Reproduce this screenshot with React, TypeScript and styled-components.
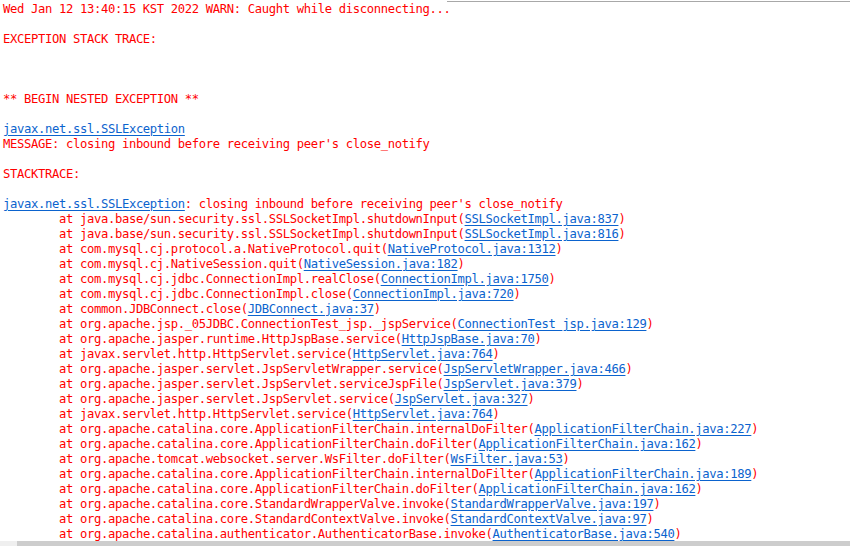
import React from "react";
import styled, { createGlobalStyle } from "styled-components";

const GlobalStyle = createGlobalStyle`
  html, body {
    margin: 0;
    padding: 0;
    background: #ffffff;
  }
  #root {
    height: 546px;
  }
`;

const Page = styled.div`
  width: 850px;
  height: 546px;
  display: flex;
  flex-direction: column;
  overflow: hidden;
  background: #ffffff;
`;

const Console = styled.div`
  flex: 1;
  overflow: hidden;
  padding-left: 3px;
  font-family: "DejaVu Sans Mono", "Liberation Mono", monospace;
  font-size: 12.2px;
  letter-spacing: -0.344px;
  line-height: 15px;
  color: #ff0000;
`;

const TopEdge = styled.div`
  height: 1px;
  margin: 1px 0 0 444px;
  background: #a8a8a8;
`;

const Line = styled.div`
  white-space: pre;
  tab-size: 8;
  height: 15px;
`;

const Link = styled.span`
  color: #0b63ce;
  text-decoration: underline;
  text-underline-offset: 2px;
`;

const HScroll = styled.div`
  height: 5px;
  display: flex;
`;

const ScrollCorner = styled.div`
  width: 17px;
  background: #efefef;
`;

const ScrollThumb = styled.div`
  flex: 1;
  background: #cdcdcd;
`;

type Seg = { text: string; link?: boolean };

const plain = (text: string): Seg[] => [{ text }];

// one "at ..." frame of the stack trace, the file:line part is a link
const frame = (method: string, file: string): Seg[] => [
  { text: `\tat ${method}(` },
  { text: file, link: true },
  { text: ")" },
];

const lines: Seg[][] = [
  plain("Wed Jan 12 13:40:15 KST 2022 WARN: Caught while disconnecting..."),
  plain(""),
  plain("EXCEPTION STACK TRACE:"),
  plain(""),
  plain(""),
  plain(""),
  plain("** BEGIN NESTED EXCEPTION ** "),
  plain(""),
  [{ text: "javax.net.ssl.SSLException", link: true }],
  plain("MESSAGE: closing inbound before receiving peer's close_notify"),
  plain(""),
  plain("STACKTRACE:"),
  plain(""),
  [
    { text: "javax.net.ssl.SSLException", link: true },
    { text: ": closing inbound before receiving peer's close_notify" },
  ],
  frame("java.base/sun.security.ssl.SSLSocketImpl.shutdownInput", "SSLSocketImpl.java:837"),
  frame("java.base/sun.security.ssl.SSLSocketImpl.shutdownInput", "SSLSocketImpl.java:816"),
  frame("com.mysql.cj.protocol.a.NativeProtocol.quit", "NativeProtocol.java:1312"),
  frame("com.mysql.cj.NativeSession.quit", "NativeSession.java:182"),
  frame("com.mysql.cj.jdbc.ConnectionImpl.realClose", "ConnectionImpl.java:1750"),
  frame("com.mysql.cj.jdbc.ConnectionImpl.close", "ConnectionImpl.java:720"),
  frame("common.JDBConnect.close", "JDBConnect.java:37"),
  frame("org.apache.jsp._05JDBC.ConnectionTest_jsp._jspService", "ConnectionTest_jsp.java:129"),
  frame("org.apache.jasper.runtime.HttpJspBase.service", "HttpJspBase.java:70"),
  frame("javax.servlet.http.HttpServlet.service", "HttpServlet.java:764"),
  frame("org.apache.jasper.servlet.JspServletWrapper.service", "JspServletWrapper.java:466"),
  frame("org.apache.jasper.servlet.JspServlet.serviceJspFile", "JspServlet.java:379"),
  frame("org.apache.jasper.servlet.JspServlet.service", "JspServlet.java:327"),
  frame("javax.servlet.http.HttpServlet.service", "HttpServlet.java:764"),
  frame("org.apache.catalina.core.ApplicationFilterChain.internalDoFilter", "ApplicationFilterChain.java:227"),
  frame("org.apache.catalina.core.ApplicationFilterChain.doFilter", "ApplicationFilterChain.java:162"),
  frame("org.apache.tomcat.websocket.server.WsFilter.doFilter", "WsFilter.java:53"),
  frame("org.apache.catalina.core.ApplicationFilterChain.internalDoFilter", "ApplicationFilterChain.java:189"),
  frame("org.apache.catalina.core.ApplicationFilterChain.doFilter", "ApplicationFilterChain.java:162"),
  frame("org.apache.catalina.core.StandardWrapperValve.invoke", "StandardWrapperValve.java:197"),
  frame("org.apache.catalina.core.StandardContextValve.invoke", "StandardContextValve.java:97"),
  frame("org.apache.catalina.authenticator.AuthenticatorBase.invoke", "AuthenticatorBase.java:540"),
];

const App = () => {
  return (
    <Page>
      <GlobalStyle />
      <Console>
        <TopEdge />
        {lines.map((segs, i) => (
          <Line key={i}>
            {segs.map((s, j) =>
              s.link ? <Link key={j}>{s.text}</Link> : <span key={j}>{s.text}</span>
            )}
          </Line>
        ))}
      </Console>
      <HScroll>
        <ScrollCorner />
        <ScrollThumb />
      </HScroll>
    </Page>
  );
};

export default App;
